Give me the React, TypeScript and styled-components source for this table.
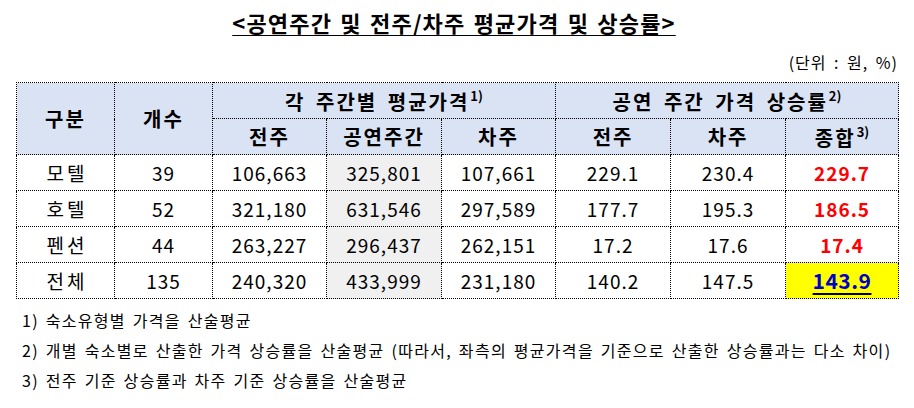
import React from 'react'
import styled, { createGlobalStyle } from 'styled-components'

const GlobalStyle = createGlobalStyle`
  html, body {
    margin: 0;
    padding: 0;
    background: #ffffff;
  }
  body {
    font-family: "Noto Sans CJK KR", "Noto Sans", sans-serif;
    color: #000000;
  }
`

const Page = styled.div`
  width: 914px;
  height: 408px;
  box-sizing: border-box;
  padding: 8px 16px 0 16px;
  display: flex;
  flex-direction: column;
  overflow: hidden;
`

const Title = styled.div`
  align-self: center;
  margin-left: -6px;
  font-size: 22px;
  font-weight: 700;
  line-height: 28px;
  letter-spacing: 1.2px;
  word-spacing: 2px;
  text-decoration: underline;
  text-underline-offset: 3px;
  text-decoration-thickness: 1px;
`

const Unit = styled.div`
  align-self: flex-end;
  margin-top: 16px;
  font-size: 16px;
  line-height: 20px;
  letter-spacing: 1px;
  word-spacing: 3px;
`

const Table = styled.table`
  margin-top: 10px;
  border-collapse: collapse;
  table-layout: fixed;
  width: 882px;
`

const Cell = styled.td<{ $bg?: string; $bold?: boolean; $color?: string }>`
  border: 1px dotted #000000;
  height: 35px;
  padding: 0;
  text-align: center;
  vertical-align: middle;
  font-size: 19px;
  line-height: 20px;
  letter-spacing: 1px;
  background: ${p => p.$bg ?? '#ffffff'};
  font-weight: ${p => (p.$bold ? 700 : 400)};
  color: ${p => p.$color ?? '#000000'};
`

const NameCell = styled(Cell)`
  letter-spacing: 3px;
  padding-left: 3px;
`

const HeadCell = styled(Cell).attrs({ as: 'th' })`
  background: #dae3f3;
  font-weight: 700;
  font-size: 20px;
  letter-spacing: 2px;
  word-spacing: 4px;
`

const Sup = styled.span`
  display: inline-block;
  font-size: 13px;
  line-height: 13px;
  letter-spacing: 0;
  vertical-align: 9px;
  margin-left: 1px;
`

const Total = styled.span`
  text-decoration: underline;
  text-decoration-color: #000000;
  text-underline-offset: 4px;
  font-size: 21px;
  letter-spacing: 0.5px;
`

const Notes = styled.div`
  margin-top: 11px;
  padding-left: 6px;
  display: flex;
  flex-direction: column;
  gap: 10px;
  font-size: 16px;
  line-height: 20px;
  letter-spacing: 1.3px;
  word-spacing: 2px;
  white-space: nowrap;
`

const cols = [98, 98, 114, 115, 114, 115, 115, 113]

type Row = {
  name: string
  count: number
  prev: string
  show: string
  next: string
  upPrev: string
  upNext: string
  total: string
}

const rows: Row[] = [
  { name: '모텔', count: 39, prev: '106,663', show: '325,801', next: '107,661', upPrev: '229.1', upNext: '230.4', total: '229.7' },
  { name: '호텔', count: 52, prev: '321,180', show: '631,546', next: '297,589', upPrev: '177.7', upNext: '195.3', total: '186.5' },
  { name: '펜션', count: 44, prev: '263,227', show: '296,437', next: '262,151', upPrev: '17.2', upNext: '17.6', total: '17.4' },
]

const notes = [
  '1) 숙소유형별 가격을 산술평균',
  '2) 개별 숙소별로 산출한 가격 상승률을 산술평균 (따라서, 좌측의 평균가격을 기준으로 산출한 상승률과는 다소 차이)',
  '3) 전주 기준 상승률과 차주 기준 상승률을 산술평균',
]

const App: React.FC = () => {
  return (
    <Page>
      <GlobalStyle />
      <Title>&lt;공연주간 및 전주/차주 평균가격 및 상승률&gt;</Title>
      <Unit>(단위 : 원, %)</Unit>
      <Table>
        <colgroup>
          {cols.map((w, i) => <col key={i} style={{ width: w }} />)}
        </colgroup>
        <thead>
          <tr>
            <HeadCell rowSpan={2}>구분</HeadCell>
            <HeadCell rowSpan={2}>개수</HeadCell>
            <HeadCell colSpan={3}>각 주간별 평균가격<Sup>1)</Sup></HeadCell>
            <HeadCell colSpan={3}>공연 주간 가격 상승률<Sup>2)</Sup></HeadCell>
          </tr>
          <tr>
            <HeadCell>전주</HeadCell>
            <HeadCell>공연주간</HeadCell>
            <HeadCell>차주</HeadCell>
            <HeadCell>전주</HeadCell>
            <HeadCell>차주</HeadCell>
            <HeadCell>종합<Sup>3)</Sup></HeadCell>
          </tr>
        </thead>
        <tbody>
          {rows.map(r => (
            <tr key={r.name}>
              <NameCell>{r.name}</NameCell>
              <Cell>{r.count}</Cell>
              <Cell>{r.prev}</Cell>
              <Cell $bg="#f0f0f0">{r.show}</Cell>
              <Cell>{r.next}</Cell>
              <Cell>{r.upPrev}</Cell>
              <Cell>{r.upNext}</Cell>
              <Cell $bold $color="#ff0000">{r.total}</Cell>
            </tr>
          ))}
          <tr>
            <NameCell>전체</NameCell>
            <Cell>135</Cell>
            <Cell>240,320</Cell>
            <Cell $bg="#f0f0f0">433,999</Cell>
            <Cell>231,180</Cell>
            <Cell>140.2</Cell>
            <Cell>147.5</Cell>
            <Cell $bold $color="#0000cc" $bg="#ffff00"><Total>143.9</Total></Cell>
          </tr>
        </tbody>
      </Table>
      <Notes>
        {notes.map(n => <div key={n}>{n}</div>)}
      </Notes>
    </Page>
  )
}

export default App
